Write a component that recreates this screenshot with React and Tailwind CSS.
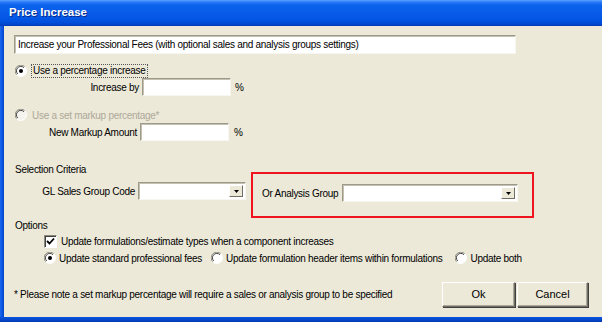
import React from "react";

const font = { fontFamily: '"Liberation Sans", Arial, sans-serif' };

function Radio({ checked, disabled }) {
  return (
    <svg width="12" height="12" viewBox="0 0 12 12" className="shrink-0">
      <circle cx="6" cy="6" r="5.5" fill={disabled ? "#f4f3ee" : "#ffffff"} />
      <path d="M1.8 9.8 A5.3 5.3 0 0 1 9.8 1.8" fill="none" stroke="#8c8a7e" strokeWidth="1" />
      <path d="M2.7 8.9 A4.2 4.2 0 0 1 8.9 2.7" fill="none" stroke="#404040" strokeWidth="1" />
      <path d="M9.8 1.8 A5.3 5.3 0 0 1 1.8 9.8" fill="none" stroke="#ffffff" strokeWidth="1" />
      {checked && <circle cx="6" cy="6" r="2" fill="#000" />}
    </svg>
  );
}

function Checkbox() {
  return (
    <div className="w-[13px] h-[13px] bg-white border-t border-l border-[#8c8a7e] border-b border-r border-b-white border-r-white shadow-[inset_1px_1px_0_#404040] flex items-center justify-center shrink-0">
      <svg width="9" height="9" viewBox="0 0 9 9">
        <path d="M1 4 L3.5 6.5 L8 1.5" fill="none" stroke="#000" strokeWidth="1.8" />
      </svg>
    </div>
  );
}

function TextBox({ className }) {
  return (
    <div
      className={
        "bg-white border-t border-l border-[#9d9a8c] border-b border-r border-b-[#f7f6f0] border-r-[#f7f6f0] shadow-[inset_1px_1px_0_#c4c1b2] " +
        className
      }
    />
  );
}

function Combo({ className }) {
  return (
    <div
      className={
        "bg-white border-t border-l border-[#9d9a8c] border-b border-r border-b-[#f7f6f0] border-r-[#f7f6f0] shadow-[inset_1px_1px_0_#c4c1b2] flex justify-end p-[2px] " +
        className
      }
    >
      <div className="w-[14px] h-full bg-[#ece9d8] border-t border-l border-white border-b border-r border-b-[#716f64] border-r-[#716f64] flex items-center justify-center">
        <svg width="5" height="3" viewBox="0 0 5 3">
          <path d="M0 0 H5 L2.5 3 Z" fill="#000" />
        </svg>
      </div>
    </div>
  );
}

function Button({ children, className }) {
  return (
    <div
      className={
        "h-[25px] bg-[#ece9d8] border-t border-l border-white border-b border-r border-b-[#716f64] border-r-[#716f64] shadow-[inset_-1px_-1px_0_#aca899,1px_1px_0_#404040] flex items-center justify-center text-[11px] tracking-[0px] text-black " +
        className
      }
    >
      {children}
    </div>
  );
}

export default function App() {
  return (
    <div className="w-[602px] h-[322px] bg-[#ece9d8] flex flex-col overflow-hidden text-[10px] tracking-[-0.28px] text-black whitespace-nowrap" style={font}>
      <div className="h-[26px] shrink-0 flex items-center pl-[9px] bg-[linear-gradient(to_bottom,#5aa2ff_0px,#2b7cf8_2px,#0c62ec_5px,#0558e6_17px,#0150dd_22px,#0042c6_25px,#0036b0_26px)]">
        <span className="text-white font-bold text-[11.5px] tracking-[0px]" style={{ textShadow: "1px 1px 0 #0a2a8a" }}>
          Price Increase
        </span>
      </div>
      <div className="flex flex-1 min-h-0">
        <div className="w-[4px] shrink-0 bg-[linear-gradient(to_right,#1e6af0,#0a55e0_2px,#0446c8)]" />
        <div className="flex-1 flex flex-col">
          <div className="mt-[9px] ml-[10px] w-[502px] h-[19px] bg-white border-t border-l border-[#9d9a8c] border-b border-r border-b-[#f7f6f0] border-r-[#f7f6f0] shadow-[inset_1px_1px_0_#c4c1b2] flex items-center pl-[3px]">
            Increase your Professional Fees (with optional sales and analysis groups settings)
          </div>

          <div className="mt-[10px] h-[14px] flex items-center ml-[11px]">
            <Radio checked />
            <span className="ml-[4px] px-[1px] border border-dotted border-[#555] leading-[12px]">Use a percentage increase</span>
          </div>

          <div className="h-[18px] flex items-center">
            <span className="w-[135px] text-right">Increase by</span>
            <TextBox className="ml-[3px] w-[89px] h-[18px]" />
            <span className="ml-[4px]">%</span>
          </div>

          <div className="mt-[12px] h-[14px] flex items-center ml-[11px]">
            <Radio disabled />
            <span className="ml-[5px] text-[#aca899]">Use a set markup percentage*</span>
          </div>

          <div className="mt-[1px] h-[18px] flex items-center">
            <span className="w-[133px] text-right">New Markup Amount</span>
            <TextBox className="ml-[3px] w-[89px] h-[18px]" />
            <span className="ml-[5px]">%</span>
          </div>

          <div className="mt-[21px] flex items-start">
            <div className="w-[242px] flex flex-col">
              <div className="h-[14px] flex items-center ml-[11px]">Selection Criteria</div>
              <div className="mt-[6px] h-[18px] flex items-center">
                <span className="w-[131px] text-right">GL Sales Group Code</span>
                <Combo className="ml-[3px] w-[108px] h-[18px]" />
              </div>
            </div>
            <div className="mt-[10px] ml-[5px] w-[283px] h-[46px] border-2 border-[#f0141e] flex items-start pl-[9px]">
              <div className="mt-[10px] h-[18px] flex items-center">
                <span className="w-[78px]">Or Analysis Group</span>
                <Combo className="ml-[2px] w-[176px] h-[18px]" />
              </div>
            </div>
          </div>

          <div className="h-[14px] flex items-center ml-[11px]">Options</div>

          <div className="mt-[2px] h-[14px] flex items-center ml-[40px]">
            <Checkbox />
            <span className="ml-[4px]">Update formulations/estimate types when a component increases</span>
          </div>

          <div className="mt-[3px] h-[14px] flex items-center ml-[40px]">
            <Radio checked />
            <span className="ml-[3px]">Update standard professional fees</span>
            <span className="ml-[9px] flex items-center">
              <Radio />
            </span>
            <span className="ml-[3px]">Update formulation header items within formulations</span>
            <span className="ml-[13px] flex items-center">
              <Radio />
            </span>
            <span className="ml-[3px]">Update both</span>
          </div>

          <div className="mt-[17px] h-[25px] flex items-center">
            <span className="ml-[10px] w-[428px]">* Please note a set markup percentage will require a sales or analysis group to be specified</span>
            <Button className="w-[73px]">Ok</Button>
            <Button className="ml-[2px] w-[71px]">Cancel</Button>
          </div>
        </div>
      </div>
      <div className="h-[5px] shrink-0 bg-[linear-gradient(to_bottom,#0a55e0,#0446c8_3px,#0038b0)]" />
    </div>
  );
}
